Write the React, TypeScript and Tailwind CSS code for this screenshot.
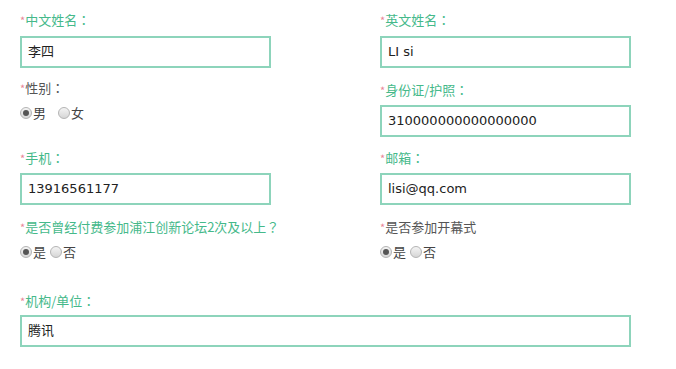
const font = { fontFamily: '"DejaVu Sans", "Noto Sans CJK SC", sans-serif' }
const cjk = { fontFamily: '"Noto Sans CJK SC", sans-serif' }
const punct = { fontFamily: '"Noto Sans CJK TC", sans-serif' }

// trailing full-width colon / question mark sits centred in the reference, so use the TC glyph for it
const Label = ({ text, green = true }: { text: string; green?: boolean }) => {
    const last = text.slice(-1)
    const split = last === "：" || last === "？"
    return (
        <p className={`h-5 leading-5 text-[13px] whitespace-nowrap ${green ? "text-[#45b98a]" : "text-[#555555]"}`} style={cjk}>
            <span className="text-[#ea8598] text-[11px]">*</span>
            {split ? text.slice(0, -1) : text}
            {split && <span style={punct}>{last}</span>}
        </p>
    )
}

const Field = ({ value, className = "" }: { value: string; className?: string }) => (
    <div className={`h-8 border-2 border-[#8dd4bb] bg-white px-[6px] flex items-center text-[13px] text-[#222222] ${className}`}>
        {value}
    </div>
)

const Radio = ({ checked }: { checked?: boolean }) => (
    <span className="w-3 h-3 rounded-full border border-[#b4b4b4] bg-gradient-to-b from-[#f4f4f4] to-[#d6d6d6] flex items-center justify-center">
        {checked && <span className="w-[6px] h-[6px] rounded-full bg-[#555555]" />}
    </span>
)

const RadioGroup = ({ options, gap }: { options: string[]; gap: string }) => (
    <div className={`flex items-center h-4 text-[13px] text-[#444444] ${gap}`} style={cjk}>
        {options.map((o, i) => (
            <span key={o} className="flex items-center gap-[1px]">
                <Radio checked={i === 0} />
                {o}
            </span>
        ))}
    </div>
)

export default function App() {
    return (
        <div className="w-[676px] h-[369px] bg-white overflow-hidden pl-5 pt-[10px]" style={font}>
            <div className="grid grid-cols-[251px_251px] gap-x-[109px]">
                <div>
                    <Label text="中文姓名：" />
                    <Field value="李四" className="mt-[6px]" />
                </div>
                <div>
                    <Label text="英文姓名：" />
                    <Field value="LI si" className="mt-[6px]" />
                </div>

                <div className="mt-[10px]">
                    <Label text="性别：" green={false} />
                    <div className="mt-[7px]">
                        <RadioGroup options={["男", "女"]} gap="gap-[12px]" />
                    </div>
                </div>
                <div className="mt-3">
                    <Label text="身份证/护照：" />
                    <Field value="310000000000000000" className="mt-[5px]" />
                </div>

                <div className="mt-[11px]">
                    <Label text="手机：" />
                    <Field value="13916561177" className="mt-[5px]" />
                </div>
                <div className="mt-[11px]">
                    <Label text="邮箱：" />
                    <Field value="lisi@qq.com" className="mt-[5px]" />
                </div>

                <div className="mt-3">
                    <Label text="是否曾经付费参加浦江创新论坛2次及以上？" />
                    <div className="mt-[7px]">
                        <RadioGroup options={["是", "否"]} gap="gap-[4px]" />
                    </div>
                </div>
                <div className="mt-3">
                    <Label text="是否参加开幕式" green={false} />
                    <div className="mt-[7px]">
                        <RadioGroup options={["是", "否"]} gap="gap-[4px]" />
                    </div>
                </div>
            </div>

            <div className="mt-[31px] w-[611px]">
                <Label text="机构/单位：" />
                <Field value="腾讯" className="mt-1" />
            </div>
        </div>
    )
}
